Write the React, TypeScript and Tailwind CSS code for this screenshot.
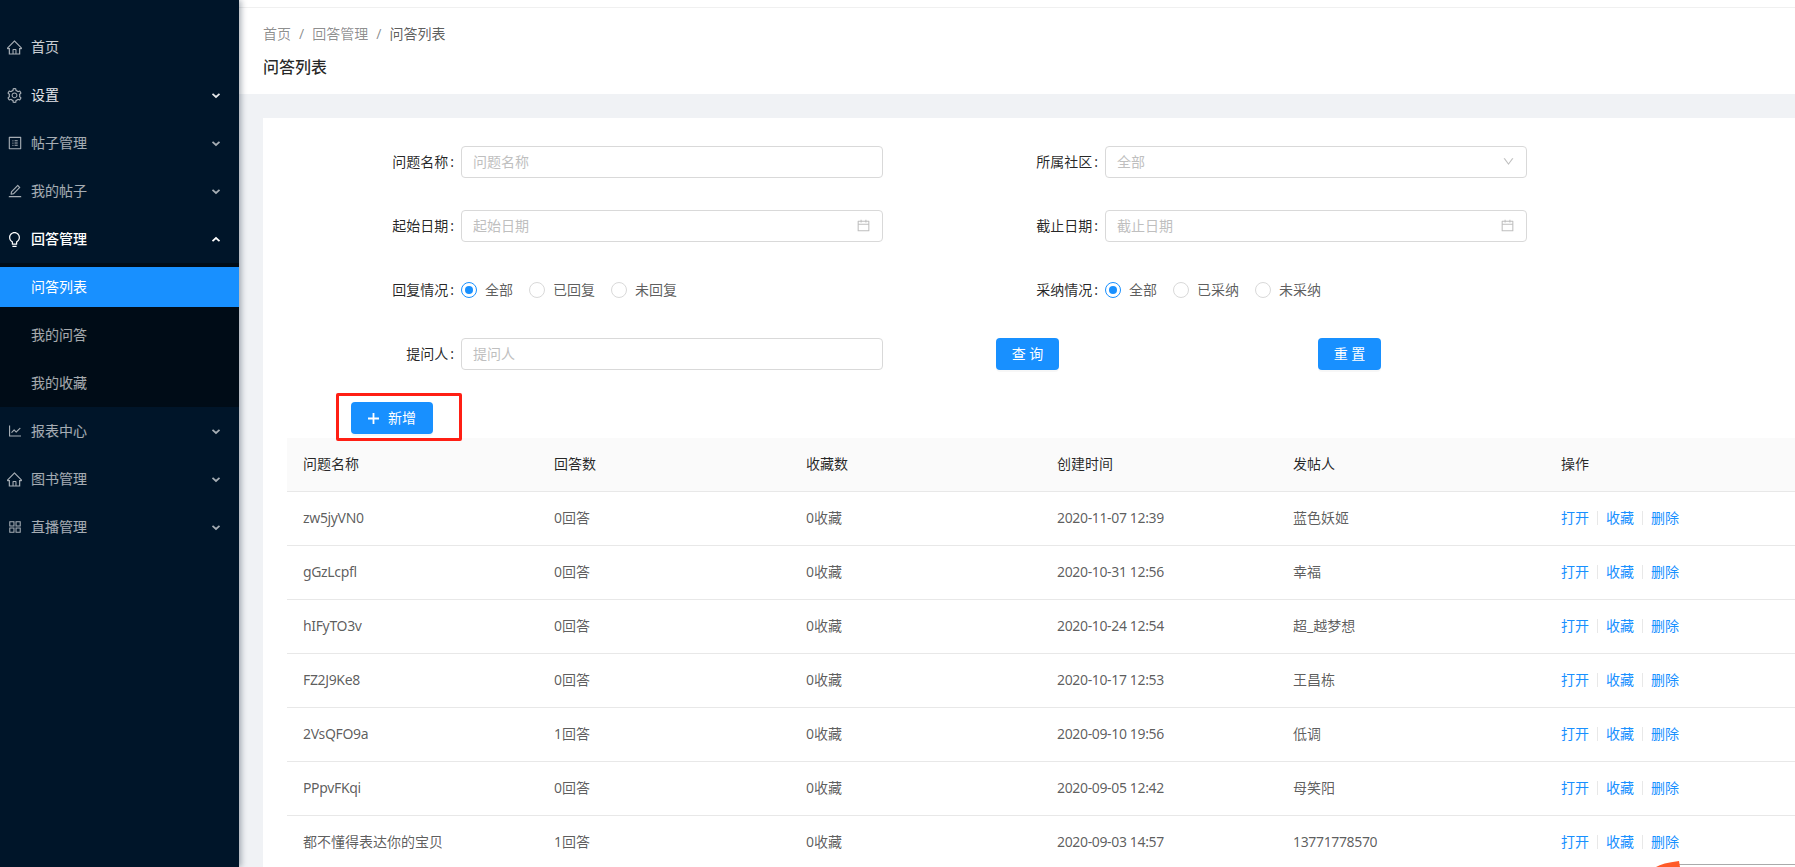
import type { ReactNode } from "react";
import {
  AiOutlineHome,
  AiOutlineSetting,
  AiOutlineProfile,
  AiOutlineEdit,
  AiOutlineBulb,
  AiOutlineLineChart,
  AiOutlineAppstore,
  AiOutlineCalendar,
  AiOutlineDown,
} from "react-icons/ai";

const Chevron = ({ up = false, className = "" }: { up?: boolean; className?: string }) => (
  <svg width="10" height="7" viewBox="0 0 10 7" className={className}>
    <polyline
      points={up ? "1.5,5.2 5,2 8.5,5.2" : "1.5,1.8 5,5 8.5,1.8"}
      fill="none"
      stroke="currentColor"
      strokeWidth="1.7"
    />
  </svg>
);

const menuItems = [
  { label: "帖子管理", icon: <AiOutlineProfile size={16} /> },
  { label: "我的帖子", icon: <AiOutlineEdit size={16} /> },
];

const bottomItems = [
  { label: "报表中心", icon: <AiOutlineLineChart size={16} /> },
  { label: "图书管理", icon: <AiOutlineHome size={17} /> },
  { label: "直播管理", icon: <AiOutlineAppstore size={16} /> },
];

const MenuRow = ({ icon, label, className = "" }: { icon: ReactNode; label: string; className?: string }) => (
  <div className={`flex items-center h-[48px] ${className}`}>
    <span className="w-[31px] flex justify-center pl-[2px] pr-[4px] shrink-0 text-white/65">{icon}</span>
    <span className="flex-1">{label}</span>
    <Chevron className="mr-[18px]" />
  </div>
);

const Sidebar = () => (
  <aside className="w-[239px] shrink-0 h-full bg-[#001529] text-sm text-white/65 pt-[23px] shadow-[2px_0_6px_rgba(0,21,41,0.35)] z-10">
    <div className="flex items-center h-[48px] text-white/80">
      <span className="w-[31px] flex justify-center pl-[2px] pr-[4px] shrink-0 text-white/65">
        <AiOutlineHome size={17} />
      </span>
      <span>首页</span>
    </div>
    <MenuRow icon={<AiOutlineSetting size={17} />} label="设置" className="text-white/90" />
    {menuItems.map((m) => (
      <MenuRow key={m.label} icon={m.icon} label={m.label} />
    ))}
    <div className="flex items-center h-[48px] text-white font-medium">
      <span className="w-[31px] flex justify-center pl-[2px] pr-[4px] shrink-0">
        <AiOutlineBulb size={17} />
      </span>
      <span className="flex-1">回答管理</span>
      <Chevron up className="mr-[18px]" />
    </div>
    <div className="bg-[#000c17] py-[4px]">
      <div className="h-[40px] mb-[8px] pl-[31px] flex items-center bg-[#1890ff] text-white">问答列表</div>
      <div className="h-[40px] mb-[8px] pl-[31px] flex items-center">我的问答</div>
      <div className="h-[40px] pl-[31px] flex items-center">我的收藏</div>
    </div>
    {bottomItems.map((m) => (
      <MenuRow key={m.label} icon={m.icon} label={m.label} />
    ))}
  </aside>
);

const Label = ({ text }: { text: string }) => (
  <div className="h-[32px] pb-[1px] flex items-center justify-end pr-[7px] text-black/85">
    {text}
    <span className="ml-[2px]">:</span>
  </div>
);

const Input = ({ placeholder, icon }: { placeholder: string; icon?: ReactNode }) => (
  <div className="h-[32px] pb-[1px] flex items-center justify-between border border-[#d9d9d9] rounded-[4px] pl-[11px] pr-[11px] bg-white text-[#bfbfbf]">
    <span>{placeholder}</span>
    {icon}
  </div>
);

const RadioGroup = ({ options }: { options: string[] }) => (
  <div className="h-[32px] flex items-center text-black/65">
    {options.map((o, i) => (
      <div key={o} className="flex items-center mr-[16px]">
        {i === 0 ? (
          <span className="w-[16px] h-[16px] rounded-full border border-[#1890ff] flex items-center justify-center mr-[8px]">
            <span className="w-[8px] h-[8px] rounded-full bg-[#1890ff]" />
          </span>
        ) : (
          <span className="w-[16px] h-[16px] rounded-full border border-[#d9d9d9] mr-[8px]" />
        )}
        {o}
      </div>
    ))}
  </div>
);

const PrimaryButton = ({ children, className = "" }: { children: ReactNode; className?: string }) => (
  <button className={`w-[63px] h-[32px] bg-[#1890ff] rounded-[4px] text-white shadow-[0_2px_0_rgba(0,0,0,0.03)] ${className}`}>
    {children}
  </button>
);

const rows = [
  ["zw5jyVN0", "0回答", "0收藏", "2020-11-07 12:39", "蓝色妖姬"],
  ["gGzLcpfl", "0回答", "0收藏", "2020-10-31 12:56", "幸福"],
  ["hIFyTO3v", "0回答", "0收藏", "2020-10-24 12:54", "超_越梦想"],
  ["FZ2J9Ke8", "0回答", "0收藏", "2020-10-17 12:53", "王昌栋"],
  ["2VsQFO9a", "1回答", "0收藏", "2020-09-10 19:56", "低调"],
  ["PPpvFKqi", "0回答", "0收藏", "2020-09-05 12:42", "母笑阳"],
  ["都不懂得表达你的宝贝", "1回答", "0收藏", "2020-09-03 14:57", "13771778570"],
];

const headers = [
  { label: "问题名称", width: "w-[251px]" },
  { label: "回答数", width: "w-[252px]" },
  { label: "收藏数", width: "w-[251px]" },
  { label: "创建时间", width: "w-[236px]" },
  { label: "发帖人", width: "w-[268px]" },
  { label: "操作", width: "" },
];

const Actions = () => (
  <div className="flex items-center text-[#1890ff]">
    <span>打开</span>
    <span className="w-px h-[14px] bg-[#e8e8e8] mx-[8px]" />
    <span>收藏</span>
    <span className="w-px h-[14px] bg-[#e8e8e8] mx-[8px]" />
    <span>删除</span>
  </div>
);

const isLatin = (s: string) => /^[\x00-\x7f]+$/.test(s);

export default function App() {
  return (
    <div className="flex h-[867px] w-[1795px] overflow-hidden relative bg-[#f0f2f5] text-sm font-['Noto_Sans','Noto_Sans_CJK_SC',sans-serif]">
      <Sidebar />
      <main className="flex-1 min-w-0 h-full">
        <div className="h-[8px] bg-white border-b border-[#f0f0f0]" />
        <div className="h-[86px] bg-white pl-[24px] pt-[15px]">
          <div className="flex items-center h-[22px] text-black/45">
            <span>首页</span>
            <span className="mx-[8px]">/</span>
            <span>回答管理</span>
            <span className="mx-[8px]">/</span>
            <span className="text-black/65">问答列表</span>
          </div>
          <h1 className="mt-[10px] text-base leading-[24px] font-medium text-black/85">问答列表</h1>
        </div>
        <div className="pt-[24px] pl-[24px]">
          <div className="bg-white pt-[28px] h-[800px]">
            <div className="grid grid-cols-[198px_422px_222px_422px] gap-y-[32px]">
              <Label text="问题名称" />
              <Input placeholder="问题名称" />
              <Label text="所属社区" />
              <Input placeholder="全部" icon={<AiOutlineDown size={13} className="text-[#bfbfbf]" />} />
              <Label text="起始日期" />
              <Input placeholder="起始日期" icon={<AiOutlineCalendar size={15} className="text-[#bfbfbf]" />} />
              <Label text="截止日期" />
              <Input placeholder="截止日期" icon={<AiOutlineCalendar size={15} className="text-[#bfbfbf]" />} />
              <Label text="回复情况" />
              <RadioGroup options={["全部", "已回复", "未回复"]} />
              <Label text="采纳情况" />
              <RadioGroup options={["全部", "已采纳", "未采纳"]} />
              <Label text="提问人" />
              <Input placeholder="提问人" />
              <div className="col-span-2 flex pl-[113px]">
                <PrimaryButton>查 询</PrimaryButton>
                <PrimaryButton className="ml-[259px]">重 置</PrimaryButton>
              </div>
            </div>
            <div className="pl-[88px] mt-[32px] mb-[4px]">
              <div className="relative w-[82px]">
                <button className="w-[82px] h-[32px] bg-[#1890ff] rounded-[4px] text-white flex items-center justify-center shadow-[0_2px_0_rgba(0,0,0,0.03)]">
                  <svg width="13" height="13" viewBox="0 0 13 13" className="mr-[8px] ml-[-1px]">
                    <path d="M6.5 1v11M1 6.5h11" stroke="currentColor" strokeWidth="1.8" fill="none" />
                  </svg>
                  新增
                </button>
                <div className="absolute left-[-15px] top-[-9px] w-[126px] h-[48px] border-[3px] border-[#ff1f14] rounded-[2px]" />
              </div>
            </div>
            <div className="pl-[24px]">
              <table className="w-full table-fixed border-separate border-spacing-0 text-left">
                <thead>
                  <tr className="text-black/85">
                    {headers.map((h) => (
                      <th key={h.label} className={`${h.width} h-[54px] pl-[16px] pb-[1px] font-normal bg-[#fafafa] border-b border-[#e8e8e8]`}>
                        {h.label}
                      </th>
                    ))}
                  </tr>
                </thead>
                <tbody className="text-black/65">
                  {rows.map((r) => (
                    <tr key={r[0]}>
                      {r.map((cell, i) => (
                        <td
                          key={i}
                          className={`h-[54px] pl-[16px] pb-[1px] border-b border-[#e8e8e8] ${isLatin(cell) ? "tracking-[-0.35px]" : ""}`}
                        >
                          {cell}
                        </td>
                      ))}
                      <td className="h-[54px] pl-[16px] pb-[1px] border-b border-[#e8e8e8]">
                        <Actions />
                      </td>
                    </tr>
                  ))}
                </tbody>
              </table>
            </div>
          </div>
        </div>
      </main>
      <div className="absolute left-[1679px] bottom-[2px] right-0 h-px bg-[#aaaaaa]" />
      <svg width="24" height="6" viewBox="0 0 24 6" className="absolute left-[1656px] bottom-0">
        <path d="M0 6 Q6 2 23 0 L24 6 Z" fill="#ff5a28" />
      </svg>
    </div>
  );
}
